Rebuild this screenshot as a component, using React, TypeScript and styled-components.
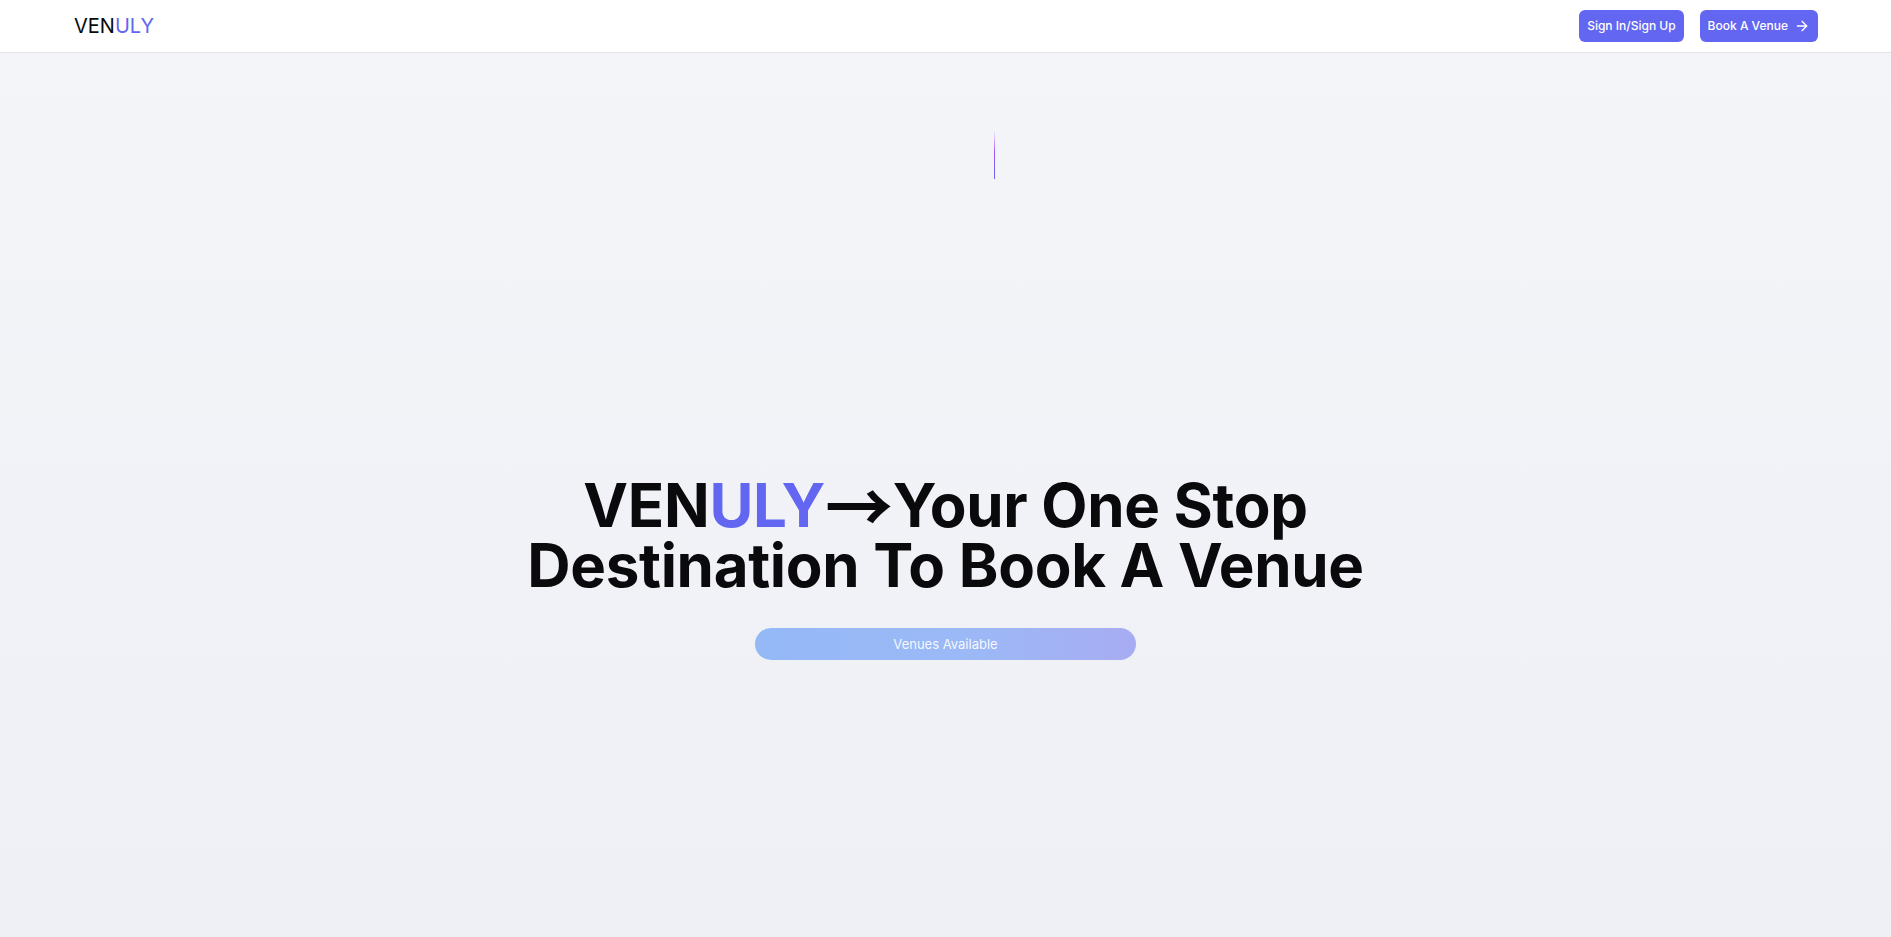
import styled, { createGlobalStyle } from 'styled-components'
import { ArrowRight } from 'lucide-react'

const GlobalStyle = createGlobalStyle`
    html, body {
        margin: 0;
        padding: 0;
    }
    body {
        font-family: Inter, "Noto Sans", sans-serif;
        background: #f4f5f9;
        color: #0a0a0a;
    }
    * {
        box-sizing: border-box;
    }
`

export default function App() {
    return (
        <>
            <GlobalStyle />
            <Page>
                <Header>
                    <Logo>VEN<Accent>ULY</Accent></Logo>
                    <Actions>
                        <NavButton>Sign In/Sign Up</NavButton>
                        <NavButton>
                            Book A Venue
                            <ArrowRight size={16} strokeWidth={2} />
                        </NavButton>
                    </Actions>
                </Header>
                <Hero>
                    <Beam />
                    <Headline>
                        VEN<Accent>ULY</Accent><Arrow>→</Arrow>Your One Stop Destination To Book A Venue
                    </Headline>
                    <Pill>Venues Available</Pill>
                </Hero>
            </Page>
        </>
    )
}

const Page = styled.div`
    display: flex;
    flex-direction: column;
    min-height: 100vh;
    background: linear-gradient(to bottom, #f4f5f9 0%, #eff0f5 100%);
`

const Header = styled.header`
    display: flex;
    align-items: center;
    justify-content: space-between;
    height: 53px;
    padding: 0 73px 0 74px;
    background: #ffffff;
    border-bottom: 1px solid #e4e4e7;
`

const Logo = styled.div`
    font-size: 20px;
    font-weight: 400;
    color: #0a0a0a;
    margin-top: -1px;
`

const Accent = styled.span`
    color: #6366f1;
`

const Arrow = styled.span`
    font-family: "Noto Sans CJK JP", "Noto Sans CJK SC", sans-serif;
    font-weight: 700;
    font-size: 68px;
    line-height: 0;
    vertical-align: -6px;
`

const Actions = styled.div`
    display: flex;
    align-items: center;
    gap: 16px;
    margin-top: -1px;
`

const NavButton = styled.button`
    all: unset;
    display: flex;
    align-items: center;
    gap: 6px;
    height: 32px;
    padding: 0 8px;
    border-radius: 6px;
    background: #6366f1;
    color: #ffffff;
    font-family: Inter, sans-serif;
    font-size: 12px;
    font-weight: 500;
    cursor: pointer;
`

const Hero = styled.main`
    flex: 1;
    display: flex;
    flex-direction: column;
    align-items: center;
    padding-top: 77px;
`

const Beam = styled.div`
    width: 1px;
    height: 49px;
    margin-left: 97px;
    background: linear-gradient(to bottom, rgba(168, 85, 247, 0) 0%, #a855f7 45%, #6366f1 100%);
`

const Headline = styled.h1`
    margin: 296px 0 0;
    max-width: 900px;
    text-align: center;
    font-size: 60px;
    line-height: 60px;
    font-weight: 700;
    letter-spacing: -0.3px;
    color: #0a0a0c;
`

const Pill = styled.div`
    display: flex;
    align-items: center;
    justify-content: center;
    width: 381px;
    height: 32px;
    margin-top: 33px;
    border-radius: 999px;
    background: linear-gradient(to right, #95b8f6 0%, #9bb9f6 55%, #a8acf2 100%);
    color: rgba(255, 255, 255, 0.92);
    font-size: 13px;
    font-weight: 400;
`
